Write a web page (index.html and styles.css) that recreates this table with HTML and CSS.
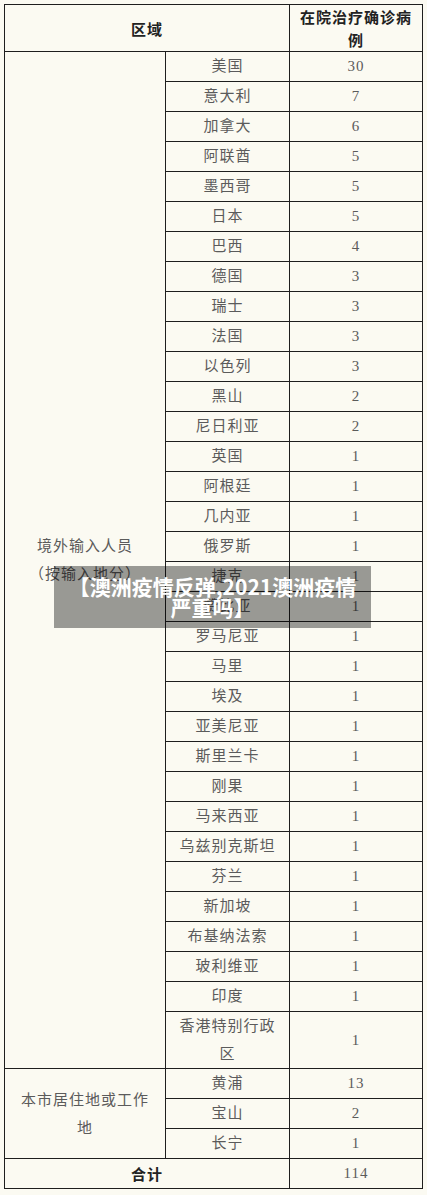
FILE: index.html
```html
<!DOCTYPE html>
<html lang="zh-CN">
<head>
<meta charset="utf-8">
<title>在院治疗确诊病例</title>
<link rel="stylesheet" href="styles.css">
</head>
<body>
<div class="wrap">
<table class="cases">
<colgroup><col class="c1"><col class="c2"><col class="c3"></colgroup>
<thead>
<tr><th colspan="2">区域</th><th>在院治疗确诊病例</th></tr>
</thead>
<tbody>
<tr><td rowspan="33" class="group">境外输入人员<br>（按输入地分）</td><td>美国</td><td>30</td></tr>
<tr><td>意大利</td><td>7</td></tr>
<tr><td>加拿大</td><td>6</td></tr>
<tr><td>阿联酋</td><td>5</td></tr>
<tr><td>墨西哥</td><td>5</td></tr>
<tr><td>日本</td><td>5</td></tr>
<tr><td>巴西</td><td>4</td></tr>
<tr><td>德国</td><td>3</td></tr>
<tr><td>瑞士</td><td>3</td></tr>
<tr><td>法国</td><td>3</td></tr>
<tr><td>以色列</td><td>3</td></tr>
<tr><td>黑山</td><td>2</td></tr>
<tr><td>尼日利亚</td><td>2</td></tr>
<tr><td>英国</td><td>1</td></tr>
<tr><td>阿根廷</td><td>1</td></tr>
<tr><td>几内亚</td><td>1</td></tr>
<tr><td>俄罗斯</td><td>1</td></tr>
<tr><td>捷克</td><td>1</td></tr>
<tr><td>赞比亚</td><td>1</td></tr>
<tr><td>罗马尼亚</td><td>1</td></tr>
<tr><td>马里</td><td>1</td></tr>
<tr><td>埃及</td><td>1</td></tr>
<tr><td>亚美尼亚</td><td>1</td></tr>
<tr><td>斯里兰卡</td><td>1</td></tr>
<tr><td>刚果</td><td>1</td></tr>
<tr><td>马来西亚</td><td>1</td></tr>
<tr><td>乌兹别克斯坦</td><td>1</td></tr>
<tr><td>芬兰</td><td>1</td></tr>
<tr><td>新加坡</td><td>1</td></tr>
<tr><td>布基纳法索</td><td>1</td></tr>
<tr><td>玻利维亚</td><td>1</td></tr>
<tr><td>印度</td><td>1</td></tr>
<tr><td class="two">香港特别行政区</td><td>1</td></tr>
<tr><td rowspan="3" class="group">本市居住地或工作地</td><td>黄浦</td><td>13</td></tr>
<tr><td>宝山</td><td>2</td></tr>
<tr><td>长宁</td><td>1</td></tr>
<tr><th colspan="2">合计</th><td>114</td></tr>
</tbody>
</table>
<div class="caption">【澳洲疫情反弹,2021澳洲疫情严重吗】</div>
</div>
</body>
</html>
```
FILE: styles.css
```css
html, body {
  margin: 0;
  padding: 0;
  background: #fbfaf2;
}
body {
  padding: 4px;
  font-family: "Liberation Serif", "Noto Sans CJK SC", serif;
  color: #5b5b5b;
}
.wrap {
  position: relative;
  width: 418px;
}
.cases {
  border-collapse: collapse;
  table-layout: fixed;
  width: 418px;
  font-size: 15px;
  letter-spacing: 1px;
}
.c1 { width: 161px; }
.c2 { width: 124px; }
.c3 { width: 133px; }
.cases td, .cases th {
  border: 1px solid #1e1e1e;
  padding: 0 10px;
  text-align: center;
  vertical-align: middle;
  line-height: 29px;
  font-weight: normal;
}
.cases td.group {
  line-height: 28px;
}
.cases td.two {
  line-height: 28px;
}
.cases th {
  font-family: "Noto Sans CJK SC", sans-serif;
  font-weight: bold;
  color: #222;
  font-size: 15px;
}
.cases thead th {
  line-height: 23px;
}
.caption {
  position: absolute;
  left: 50px;
  top: 562px;
  width: 295px;
  padding: 10px 11px;
  background: rgba(0, 0, 0, 0.39);
  color: #fff;
  font-family: "Noto Sans CJK SC", sans-serif;
  font-weight: bold;
  font-size: 21px;
  line-height: 21px;
  text-align: center;
  letter-spacing: 0;
}
```
